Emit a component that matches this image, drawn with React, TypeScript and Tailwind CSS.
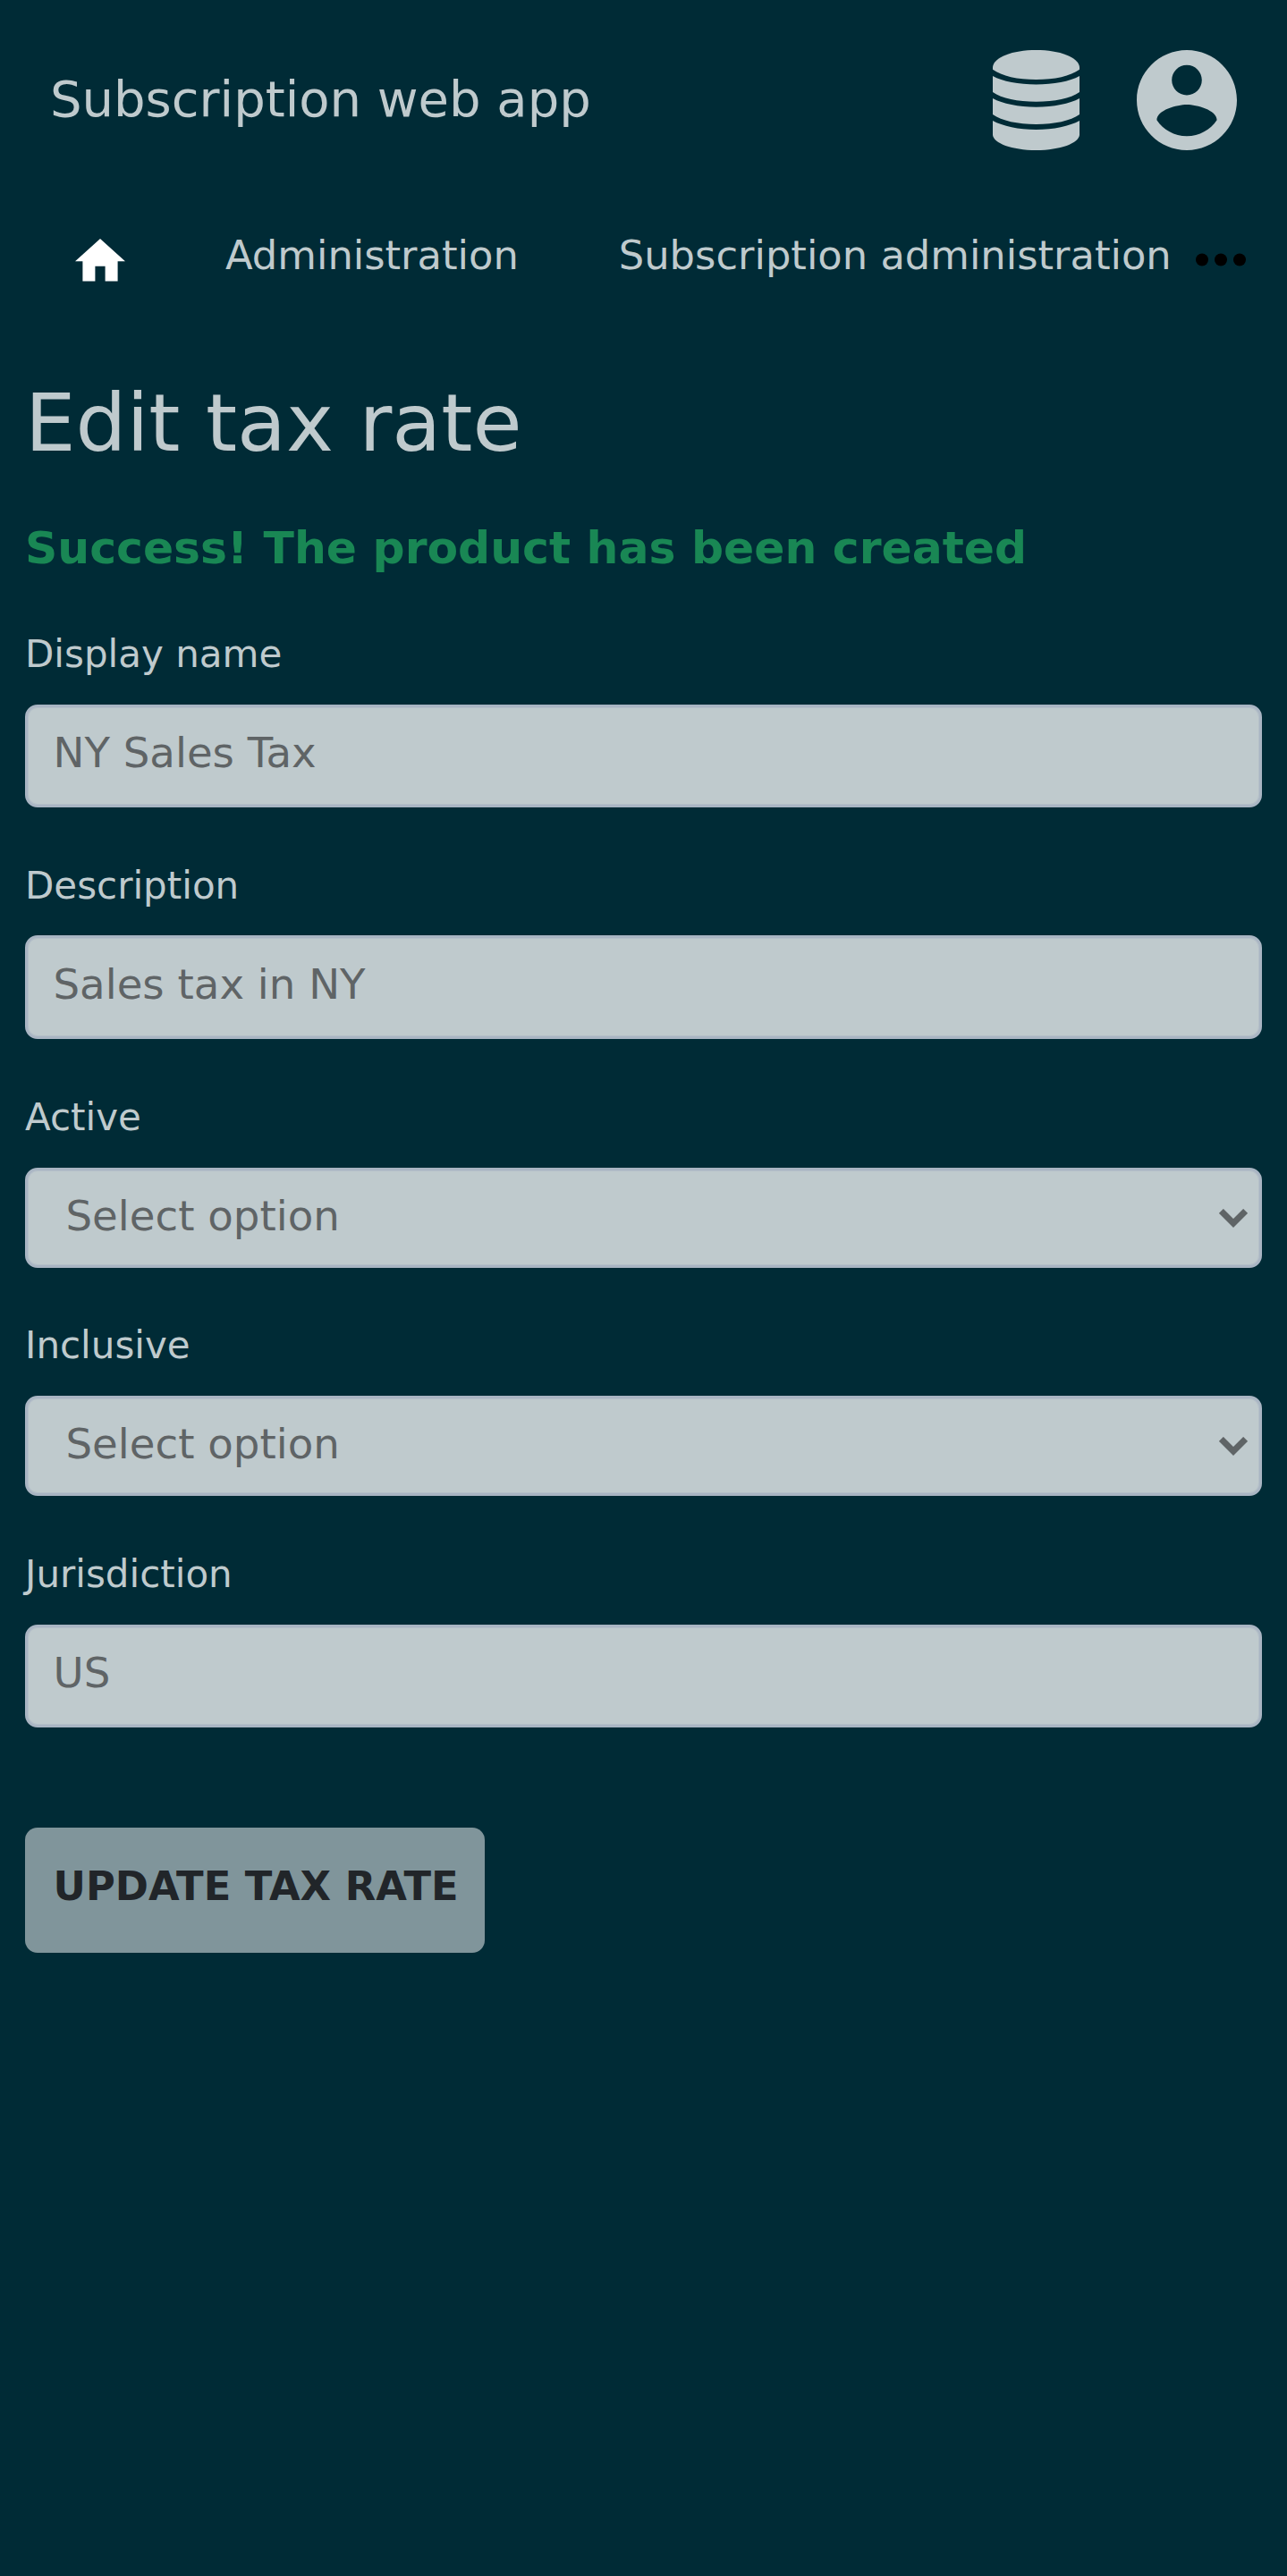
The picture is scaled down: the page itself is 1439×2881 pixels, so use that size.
import React from "react";

type FieldProps = {
  id: string;
  label: string;
  placeholder: string;
  className: string;
  controlClassName: string;
};

function TextField({ id, label, placeholder, className, controlClassName }: FieldProps) {
  return (
    <div className={`flex flex-col ${className}`}>
      <label htmlFor={id} className="text-[42px] leading-[49px]">
        {label}
      </label>
      <input
        id={id}
        type="text"
        placeholder={placeholder}
        className={`w-full rounded-[14px] border-[3px] border-[#a9b5c3] bg-[#bfcacd] px-[28.5px] pb-[31px] text-[46.67px] leading-[54px] text-[#5f6466] shadow-[inset_0_0_0_1px_#b4bfc8] outline-none placeholder:text-[#5f6466] placeholder:opacity-100 ${controlClassName}`}
      />
    </div>
  );
}

function SelectField({ id, label, placeholder, className, controlClassName }: FieldProps) {
  return (
    <div className={`flex flex-col ${className}`}>
      <span id={id} className="text-[42px] leading-[49px]">
        {label}
      </span>
      <button
        type="button"
        aria-labelledby={id}
        className={`flex h-[112px] w-full items-start justify-between rounded-[14px] border-[3px] border-[#a9b5c3] bg-[#bfcacd] pt-[24px] pr-[13px] pl-[42.5px] text-[46.67px] leading-[54px] text-[#5f6466] shadow-[inset_0_0_0_1px_#b4bfc8] ${controlClassName}`}
      >
        <span>{placeholder}</span>
        <svg viewBox="0 0 32 21" className="mt-[19px] h-[21px] w-[32px]" fill="none">
          <path d="M2.4 2.4L16 16L29.6 2.4" stroke="#5f6466" strokeWidth="7" />
        </svg>
      </button>
    </div>
  );
}

function DatabaseIcon() {
  return (
    <svg viewBox="0 0 97 112" className="h-[112px] w-[97px]" fill="currentColor">
      <path d="M0 19C1 8 22 0 48.5 0S96 8 97 19V21.7C87 29 69 33 48.5 33S10 29 0 21.7Z" />
      <path d="M0 29C11 35 29 38.5 48.5 38.5S86 35 97 29V47C87 54 69 57.8 48.5 57.8S10 54 0 47Z" />
      <path d="M0 54C11 60 29 63.7 48.5 63.7S86 60 97 54V72C87 79 69 83 48.5 83S10 79 0 72Z" />
      <path d="M0 79C11 85 29 89 48.5 89S86 85 97 79V95C96 104 76 112 48.5 112S1 104 0 95Z" />
    </svg>
  );
}

function AccountIcon() {
  return (
    <svg viewBox="2 2 20 20" className="h-[112px] w-[112px]" fill="currentColor">
      <path d="M12 2C6.48 2 2 6.48 2 12s4.48 10 10 10 10-4.48 10-10S17.52 2 12 2zm0 3c1.66 0 3 1.34 3 3s-1.34 3-3 3-3-1.34-3-3 1.34-3 3-3zm0 14.2c-2.5 0-4.71-1.28-6-3.22.03-1.99 4-3.08 6-3.08 1.99 0 5.97 1.09 6 3.08-1.29 1.94-3.5 3.22-6 3.22z" />
    </svg>
  );
}

export default function App() {
  return (
    <div className="min-h-[2881px] w-full overflow-hidden bg-[#002b36] font-['DejaVu_Sans',sans-serif] text-[#bfcacd]">
      <header className="flex h-[224px] items-start justify-between px-[56px]">
        <div className="mt-[81px] text-[56px] leading-[59px] whitespace-nowrap">Subscription web app</div>
        <div className="mt-[56px] flex gap-[64px]">
          <DatabaseIcon />
          <AccountIcon />
        </div>
      </header>

      <nav className="flex h-[197px] items-start pr-[46px] pl-[84px] text-[44.8px] leading-[53px] whitespace-nowrap">
        <a href="#" aria-label="Home" className="mt-[43px] mr-[112px]">
          <svg viewBox="2 3 20 17" className="block h-[47.6px] w-[56px]" fill="#fff">
            <path d="M10 20v-6h4v6h5v-8h3L12 3 2 12h3v8z" />
          </svg>
        </a>
        <a href="#" className="mt-[35px] mr-[112px]">Administration</a>
        <a href="#" className="mt-[35px]">Subscription administration</a>
        <button type="button" aria-label="More" className="mt-[59px] ml-auto">
          <svg viewBox="0 0 56 15" className="block h-[15px] w-[56px]" fill="#000">
            <circle cx="7" cy="7.5" r="7" />
            <circle cx="28" cy="7.5" r="7" />
            <circle cx="49" cy="7.5" r="7" />
          </svg>
        </button>
      </nav>

      <main className="flex flex-col px-[28px]">
        <h1 className="text-[89.6px] leading-[104px]">Edit tax rate</h1>
        <p className="mt-[58px] text-[50.4px] leading-[59px] font-bold text-[#198754]">
          Success! The product has been created
        </p>
        <form className="flex flex-col">
          <TextField
            id="name"
            label="Display name"
            placeholder="NY Sales Tax"
            className="mt-[65px]"
            controlClassName="mt-[32px] h-[115px] pt-[24px]"
          />
          <TextField
            id="description"
            label="Description"
            placeholder="Sales tax in NY"
            className="mt-[63px]"
            controlClassName="mt-[31px] h-[116px] pt-[25px]"
          />
          <SelectField
            id="active"
            label="Active"
            placeholder="Select option"
            className="mt-[63px]"
            controlClassName="mt-[32px]"
          />
          <SelectField
            id="inclusive"
            label="Inclusive"
            placeholder="Select option"
            className="mt-[62px]"
            controlClassName="mt-[32px]"
          />
          <TextField
            id="jurisdiction"
            label="Jurisdiction"
            placeholder="US"
            className="mt-[63px]"
            controlClassName="mt-[32px] h-[115px] pt-[24px]"
          />
          <button
            type="button"
            className="mt-[112px] flex h-[140px] w-[514px] items-start self-start rounded-[14px] bg-[#80959b] pt-[39px] pl-[31.5px] text-[44.8px] leading-[53px] font-bold whitespace-nowrap text-[#212529]"
          >
            UPDATE TAX RATE
          </button>
        </form>
      </main>
    </div>
  );
}
